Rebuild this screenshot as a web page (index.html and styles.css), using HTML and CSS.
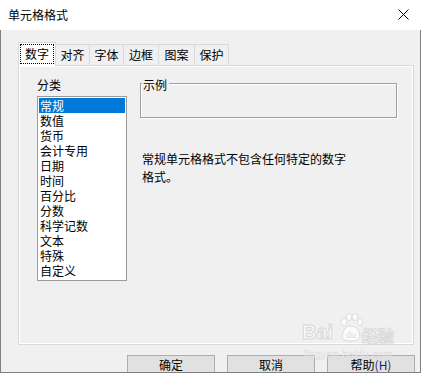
FILE: index.html
```html
<!DOCTYPE html>
<html lang="zh-CN">
<head>
  <meta charset="UTF-8">
  <title>单元格格式</title>
  <link rel="stylesheet" href="styles.css">
</head>
<body>
  <div class="window">
    <div class="titlebar">
      <span class="title">单元格格式</span>
      <svg class="close" width="11" height="11" viewBox="0 0 11 11">
        <path d="M0.5 0.5 L10.5 10.5 M10.5 0.5 L0.5 10.5" stroke="#000" stroke-width="1" fill="none"/>
      </svg>
    </div>

    <div class="client">
      <div class="tabs">
        <div class="tab active"><span class="focus">数字</span></div>
        <div class="tab w34">对齐</div>
        <div class="tab w35">字体</div>
        <div class="tab w36">边框</div>
        <div class="tab w37">图案</div>
        <div class="tab w34">保护</div>
      </div>

      <div class="panel">
        <div class="left">
          <div class="label">分类</div>
          <ul class="list">
            <li class="selected">常规</li>
            <li>数值</li>
            <li>货币</li>
            <li>会计专用</li>
            <li>日期</li>
            <li>时间</li>
            <li>百分比</li>
            <li>分数</li>
            <li>科学记数</li>
            <li>文本</li>
            <li>特殊</li>
            <li>自定义</li>
          </ul>
        </div>
        <div class="right">
          <div class="group">
            <span class="group-label">示例</span>
          </div>
          <p class="desc">常规单元格格式不包含任何特定的数字格式。</p>
        </div>
      </div>

      <div class="buttons">
        <button class="btn">确定</button>
        <button class="btn">取消</button>
        <button class="btn">帮助<span class="key">(H)</span></button>
      </div>
    </div>

    <div class="watermark">
      <span class="wm-bai">Bai</span>
      <svg class="paw" width="24" height="30" viewBox="0 0 24 30">
        <ellipse cx="5" cy="9" rx="3" ry="4" fill="#fff" stroke="#d6d6d6"/>
        <ellipse cx="10" cy="4" rx="3" ry="3.5" fill="#fff" stroke="#d6d6d6"/>
        <ellipse cx="16" cy="4" rx="3" ry="3.5" fill="#fff" stroke="#d6d6d6"/>
        <ellipse cx="21" cy="9" rx="2.6" ry="3.6" fill="#fff" stroke="#d6d6d6"/>
        <path d="M3 24 Q4 13 12 13 Q20 13 21 24 Q20 28 12 28 Q4 28 3 24 Z" fill="#fff" stroke="#d6d6d6"/>
        <text x="12" y="25" font-size="9" font-family="Liberation Sans, sans-serif" fill="#d6d6d6" text-anchor="middle">du</text>
      </svg>
      <span class="wm-jy">经验</span>
      <div class="wm-url">jingyan.baidu.com</div>
    </div>
  </div>
</body>
</html>
```

FILE: styles.css
```css
body {
  margin: 0;
  font-family: "Noto Sans CJK SC", "Liberation Sans", sans-serif;
  font-size: 12px;
  color: #000;
  background: #fff;
}
.window {
  position: relative;
  width: 421px;
  height: 373px;
  background: #f0f0f0;
  overflow: hidden;
}
.titlebar {
  height: 30px;
  background: #fff;
  display: flex;
  align-items: center;
  justify-content: space-between;
  padding: 0 12px 0 8px;
  box-sizing: border-box;
}
.title {
  line-height: 14px;
  margin-top: -1px;
}
.close {
  display: block;
  margin-top: -1px;
}
.client {
  height: 343px;
  box-sizing: border-box;
  border: 1px solid #808080;
  border-top: none;
  padding: 12px 5px 0 17px;
  overflow: hidden;
}
.tabs {
  display: flex;
  align-items: flex-end;
  height: 23px;
  position: relative;
  z-index: 2;
}
.tab {
  box-sizing: border-box;
  height: 21px;
  border: 1px solid #d9d9d9;
  border-bottom: none;
  margin-left: -1px;
  background: #f0f0f0;
  text-align: center;
  line-height: 18px;
  padding-top: 1px;
}
.w34 { width: 35px; }
.w35 { width: 35px; }
.w36 { width: 36px; }
.w37 { width: 37px; }
.tab.active {
  width: 38px;
  height: 24px;
  margin-left: 0;
  margin-bottom: -1px;
  background: #fff;
  padding: 1px 1px 0;
  position: relative;
  z-index: 3;
}
.focus {
  display: block;
  height: 20px;
  box-sizing: border-box;
  border: 1px dotted #000;
  line-height: 17px;
}
.tab.active + .tab {
  margin-left: -1px;
}
.panel {
  width: 396px;
  height: 280px;
  box-sizing: border-box;
  border: 1px solid #d9d9d9;
  box-shadow: inset 1px 1px 0 #fff, inset -1px -1px 0 #fff;
  padding: 11px 0 0 18px;
  display: flex;
  gap: 13px;
}
.left {
  width: 90px;
}
.label {
  line-height: 15px;
  margin-bottom: 4px;
}
.list {
  list-style: none;
  margin: 0;
  padding: 1px;
  height: 185px;
  box-sizing: border-box;
  border: 1px solid #9a9a9a;
  background: #fff;
}
.list li {
  height: 15px;
  line-height: 15px;
  padding-left: 1px;
}
.list li.selected {
  background: #0078d7;
  color: #fff;
}
.right {
  width: 257px;
  padding-top: 6px;
}
.group {
  position: relative;
  height: 35px;
  box-sizing: border-box;
  border: 1px solid #a0a0a0;
  box-shadow: 1px 1px 0 #fff, inset 1px 1px 0 #fff;
}
.group-label {
  position: absolute;
  left: 1px;
  top: -6px;
  padding: 0 2px 0 1px;
  line-height: 13px;
  background: #f0f0f0;
}
.desc {
  margin: 32px 0 0 2px;
  width: 210px;
  line-height: 18px;
}
.buttons {
  display: flex;
  justify-content: flex-end;
  gap: 12px;
  margin-top: 10px;
}
.btn {
  width: 88px;
  height: 23px;
  box-sizing: border-box;
  border: 1px solid #adadad;
  background: #e1e1e1;
  font-family: inherit;
  font-size: 12px;
  line-height: 13px;
  padding: 0;
  color: #000;
  display: flex;
  align-items: flex-start;
  justify-content: center;
  padding-top: 2px;
}
.key {
  color: #1e1e78;
}
.watermark {
  position: absolute;
  left: 302px;
  top: 312px;
  width: 100px;
  height: 50px;
  pointer-events: none;
  opacity: 0.75;
}
.wm-bai {
  position: absolute;
  left: 0;
  top: 9px;
  font-family: "Liberation Sans", sans-serif;
  font-weight: bold;
  font-size: 20px;
  color: #fff;
  -webkit-text-stroke: 1px #d0d0d0;
}
.paw {
  position: absolute;
  left: 37px;
  top: 1px;
}
.wm-jy {
  position: absolute;
  left: 60px;
  top: 11px;
  font-size: 16px;
  font-weight: bold;
  color: #fff;
  -webkit-text-stroke: 1px #d0d0d0;
}
.wm-url {
  position: absolute;
  left: 2px;
  top: 36px;
  font-family: "Liberation Sans", sans-serif;
  font-size: 11px;
  color: #fff;
  -webkit-text-stroke: 0.5px #d6d6d6;
}
```
